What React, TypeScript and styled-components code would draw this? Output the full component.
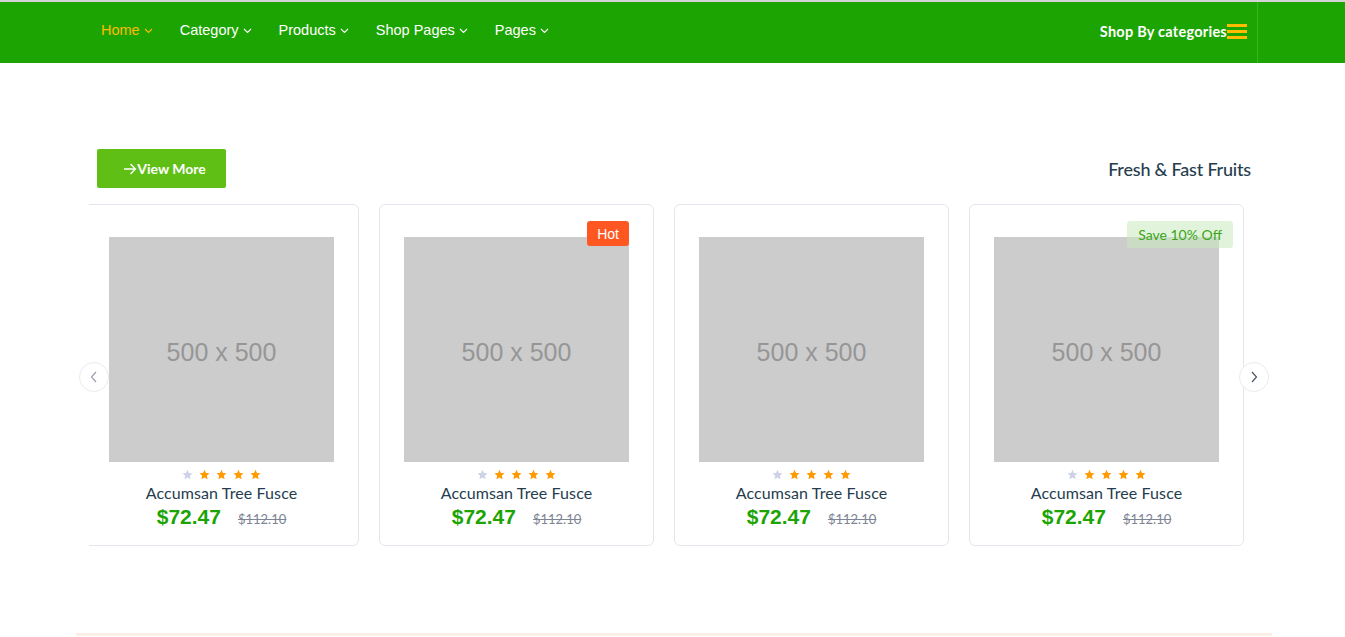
import React from 'react';
import styled, { createGlobalStyle } from 'styled-components';

const GlobalStyle = createGlobalStyle`
    html, body { margin: 0; padding: 0; background: #fff; }
    body { font-family: 'Lato', 'Liberation Sans', sans-serif; border-top: 2px solid #d4d4d4; }
    * { box-sizing: border-box; }
`;

const NavBar = styled.nav`
    height: 61px;
    background: #1ca403;
`;

const NavInner = styled.div`
    margin-left: 101px;
    width: 1157px;
    height: 100%;
    display: flex;
    align-items: center;
    justify-content: space-between;
    border-right: 1px solid #3bb223;
`;

const Menu = styled.ul`
    display: flex;
    margin: 0;
    padding: 0 0 6px;
    list-style: none;
`;

const MenuItem = styled.li<{ $active?: boolean }>`
    display: flex;
    align-items: center;
    gap: 4px;
    margin-right: 27px;
    font-family: 'Liberation Sans', Arial, sans-serif;
    font-size: 14.5px;
    color: ${(p) => (p.$active ? '#ffbb00' : '#ffffff')};
    svg { margin-top: 2px; }
`;

const CategoryToggle = styled.div`
    display: flex;
    align-items: center;
    padding: 0 10px 3px 0;
    font-family: 'Lato', sans-serif;
    font-weight: 700;
    font-size: 14.5px;
    color: #fff;
    letter-spacing: 0.25px;
`;

const Section = styled.section`
    padding-top: 86px;
`;

const Head = styled.div`
    margin-left: 97px;
    width: 1154px;
    display: flex;
    align-items: center;
    justify-content: space-between;
`;

const ViewMore = styled.button`
    width: 129px;
    height: 39px;
    border: none;
    border-radius: 2px;
    background: #5fbf15;
    color: #fff;
    font-family: 'Lato', sans-serif;
    font-weight: 700;
    font-size: 14px;
    display: flex;
    align-items: center;
    justify-content: center;
    padding: 0 0 0 6px;
    cursor: pointer;
`;

const Title = styled.h2`
    margin: 0;
    font-family: 'Lato', sans-serif;
    font-weight: 500;
    font-size: 18px;
    color: #253d4e;
    letter-spacing: -0.2px;
`;

const SliderWrap = styled.div`
    position: relative;
    margin: 16px 0 0 89px;
    width: 1155px;
`;

const Viewport = styled.div`
    overflow: hidden;
`;

const Track = styled.div`
    display: flex;
    gap: 20px;
    margin-left: -5px;
`;

const Card = styled.div`
    position: relative;
    flex: 0 0 275px;
    height: 342px;
    border: 1px solid #e4e6ee;
    border-radius: 6px;
    padding: 32px 24px 0;
    display: flex;
    flex-direction: column;
    align-items: center;
`;

const Thumb = styled.div`
    width: 225px;
    height: 225px;
    padding-top: 6px;
    background: #cccccc;
    color: #969696;
    font-family: 'Liberation Sans', Arial, sans-serif;
    font-size: 25px;
    display: flex;
    align-items: center;
    justify-content: center;
`;

const Badge = styled.span<{ $kind: 'hot' | 'save' }>`
    position: absolute;
    top: 16px;
    right: ${(p) => (p.$kind === 'hot' ? '24px' : '10px')};
    height: ${(p) => (p.$kind === 'hot' ? '25px' : '27px')};
    padding: 0 ${(p) => (p.$kind === 'hot' ? '10px' : '11px')};
    border-radius: 3px;
    display: flex;
    align-items: center;
    font-family: ${(p) => (p.$kind === 'hot' ? "'Liberation Sans', Arial" : "'Lato'")}, sans-serif;
    font-size: 14px;
    background: ${(p) => (p.$kind === 'hot' ? '#fe5722' : 'rgba(200, 235, 190, 0.55)')};
    color: ${(p) => (p.$kind === 'hot' ? '#fff' : '#3aa31a')};
`;

const Stars = styled.div`
    display: flex;
    gap: 6px;
    margin-top: 7px;
    height: 12px;
`;

const Name = styled.div`
    margin-top: 2px;
    font-family: 'Lato', sans-serif;
    font-size: 16px;
    color: #253d4e;
    letter-spacing: 0.1px;
`;

const PriceRow = styled.div`
    display: flex;
    align-items: baseline;
    gap: 17px;
    margin-top: 3px;
`;

const Price = styled.span`
    font-family: 'Liberation Sans', Arial, sans-serif;
    font-size: 21px;
    font-weight: 700;
    color: #1ca403;
`;

const OldPrice = styled.span`
    font-family: 'Lato', sans-serif;
    font-size: 13px;
    color: #7e8594;
    text-decoration: line-through;
`;

const Arrow = styled.button<{ $side: 'left' | 'right' }>`
    position: absolute;
    top: 158px;
    ${(p) => (p.$side === 'left' ? 'left: -10px;' : 'right: -25px;')}
    width: 30px;
    height: 30px;
    border-radius: 50%;
    border: 1px solid #ebebf0;
    background: #fff;
    display: flex;
    align-items: center;
    justify-content: center;
    padding: 0;
    cursor: pointer;
`;

const FootLine = styled.div`
    margin: 87px 0 0 76px;
    width: 1196px;
    height: 3px;
    background: #fdefe6;
`;

const Chevron = ({ color }: { color: string }) => (
    <svg width='9' height='6' viewBox='0 0 9 6' fill='none'>
        <path d='M1 1l3.5 3.5L8 1' stroke={color} strokeWidth='1.1' />
    </svg>
);

const Star = ({ color }: { color: string }) => (
    <svg width='11' height='11' viewBox='0 0 24 24'>
        <path
            d='M12 1.5l3.2 7.1 7.6.8-5.7 5.2 1.6 7.6L12 18.3l-6.7 3.9 1.6-7.6L1.2 9.4l7.6-.8z'
            fill={color}
        />
    </svg>
);

const menu = ['Home', 'Category', 'Products', 'Shop Pages', 'Pages'];

const products: { badge?: 'hot' | 'save' }[] = [{}, { badge: 'hot' }, {}, { badge: 'save' }];

const App: React.FC = () => {
    return (
        <>
            <GlobalStyle />
            <NavBar>
                <NavInner>
                    <Menu>
                        {menu.map((m, i) => (
                            <MenuItem key={m} $active={i === 0}>
                                {m}
                                <Chevron color={i === 0 ? '#ffbb00' : '#ffffff'} />
                            </MenuItem>
                        ))}
                    </Menu>
                    <CategoryToggle>
                        Shop By categories
                        <svg width='20' height='16' viewBox='0 0 20 16'>
                            <rect x='0' y='1' width='20' height='3' fill='#ffbb00' />
                            <rect x='0' y='7' width='20' height='3' fill='#ffbb00' />
                            <rect x='0' y='13' width='20' height='3' fill='#ffbb00' />
                        </svg>
                    </CategoryToggle>
                </NavInner>
            </NavBar>
            <Section>
                <Head>
                    <ViewMore>
                        <svg width='14' height='12' viewBox='0 0 14 12' fill='none'>
                            <path d='M1 6h11.5M7.5 1l5 5-5 5' stroke='#fff' strokeWidth='1.3' />
                        </svg>
                        View More
                    </ViewMore>
                    <Title>Fresh &amp; Fast Fruits</Title>
                </Head>
                <SliderWrap>
                    <Viewport>
                        <Track>
                            {products.map((p, i) => (
                                <Card key={i}>
                                    {p.badge === 'hot' && <Badge $kind='hot'>Hot</Badge>}
                                    {p.badge === 'save' && <Badge $kind='save'>Save 10% Off</Badge>}
                                    <Thumb>500 x 500</Thumb>
                                    <Stars>
                                        <Star color='#cdd2e8' />
                                        <Star color='#ff9a00' />
                                        <Star color='#ff9a00' />
                                        <Star color='#ff9a00' />
                                        <Star color='#ff9a00' />
                                    </Stars>
                                    <Name>Accumsan Tree Fusce</Name>
                                    <PriceRow>
                                        <Price>$72.47</Price>
                                        <OldPrice>$112.10</OldPrice>
                                    </PriceRow>
                                </Card>
                            ))}
                        </Track>
                    </Viewport>
                    <Arrow $side='left'>
                        <svg width='8' height='12' viewBox='0 0 8 12' fill='none'>
                            <path d='M6 1L1.5 6 6 11' stroke='#9aa0b0' strokeWidth='1.2' />
                        </svg>
                    </Arrow>
                    <Arrow $side='right'>
                        <svg width='8' height='12' viewBox='0 0 8 12' fill='none'>
                            <path d='M2 1l4.5 5L2 11' stroke='#4b5566' strokeWidth='1.2' />
                        </svg>
                    </Arrow>
                </SliderWrap>
                <FootLine />
            </Section>
        </>
    );
};

export default App;
